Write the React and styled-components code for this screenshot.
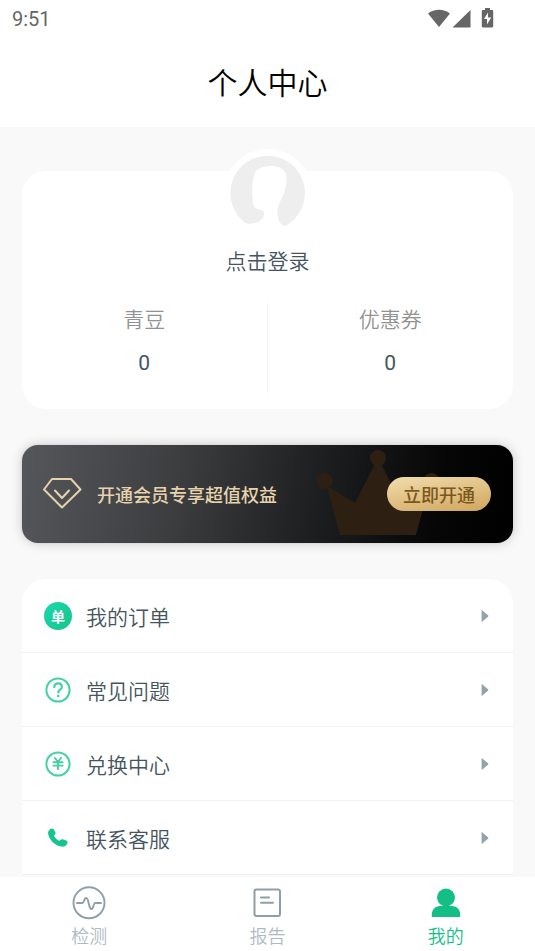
import React from "react";
import styled, { createGlobalStyle } from "styled-components";

const GlobalStyle = createGlobalStyle`
  * { box-sizing: border-box; }
  body {
    margin: 0;
    background: #f9f9f9;
    color: #455560;
    font-family: "Noto Sans CJK SC", sans-serif;
    font-size: 21px;
    font-weight: 350;
  }
  button { border: 0; margin: 0; padding: 0; background: none; font: inherit; color: inherit; cursor: pointer; }
  a { color: inherit; text-decoration: none; }
  h1, p, ul, dl, dt, dd { margin: 0; padding: 0; font-weight: inherit; }
  ul { list-style: none; }
  svg { display: block; flex: none; }
`;

const Page = styled.div`
  display: flex;
  flex-direction: column;
  min-height: 100vh;
`;

const StatusBar = styled.div`
  display: flex;
  align-items: center;
  justify-content: space-between;
  height: 38px;
  padding: 0 40px 0 12px;
  background: #fff;
  color: #666;
  font-family: Roboto, sans-serif;
  font-size: 20px;
  font-weight: 400;
`;

const StatusIcons = styled.div`
  display: flex;
  align-items: center;
  height: 36px;
`;

const Header = styled.header`
  display: flex;
  align-items: center;
  justify-content: center;
  height: 89px;
  padding-bottom: 4px;
  background: #fff;
  color: #000;
`;

const Title = styled.h1`
  font-size: 30px;
  line-height: 44px;
`;

const Content = styled.main`
  display: flex;
  flex-direction: column;
  gap: 36px;
  flex: 1;
  padding: 44px 22px 2px;
`;

const ProfileCard = styled.section`
  display: flex;
  flex-direction: column;
  align-items: center;
  padding-bottom: 16px;
  border-radius: 24px;
  background: #fff;
`;

const Avatar = styled.div`
  width: 88px;
  height: 88px;
  margin-top: -22px;
  border-radius: 50%;
  background: #fff;
  overflow: hidden;
`;

const LoginButton = styled.button`
  && {
    margin-top: 8px;
    line-height: 30px;
  }
`;

const Stats = styled.dl`
  display: grid;
  grid-template-columns: 1fr 1fr;
  align-self: stretch;
  margin-top: 28px;
`;

const Stat = styled.div`
  display: flex;
  flex-direction: column;
  align-items: center;
  gap: 15px;
  padding-bottom: 15px;
  line-height: 30px;

  &:first-child { border-right: 1px solid #f3f4f4; }
`;

const StatLabel = styled.dt`
  color: #929292;
`;

const StatValue = styled.dd`
  color: #455560;
  font-family: Roboto, sans-serif;
  font-weight: 400;
`;

const Banner = styled.section`
  position: relative;
  display: flex;
  align-items: center;
  height: 98px;
  padding: 0 22px 0 20px;
  border-radius: 16px;
  background: linear-gradient(100deg, #56575b 0%, #3c3d3f 32%, #1f2022 58%, #060606 84%, #000 100%);
  box-shadow: 0 0 12px rgba(0, 0, 0, 0.2), 0 0 1px rgba(0, 0, 0, 0.3);
`;

const Crown = styled.svg`
  position: absolute;
  right: 73px;
  bottom: 7px;
`;

const BannerText = styled.p`
  flex: 1;
  margin-left: 14px;
  color: #e6d3ad;
  font-size: 18px;
  font-weight: 500;
  line-height: 28px;
`;

const OpenButton = styled.button`
  && {
    position: relative;
    width: 104px;
    height: 34px;
    border-radius: 17px;
    background: linear-gradient(170deg, #f2dcac, #cfa65e);
    color: #7a581c;
    font-size: 18px;
    font-weight: 500;
    line-height: 34px;
  }
`;

const Menu = styled.ul`
  border-radius: 24px 24px 0 0;
  background: #fff;
`;

const MenuItem = styled.li`
  border-bottom: 1px solid #f1f2f2;
`;

const MenuLink = styled.a`
  display: flex;
  align-items: center;
  height: 73px;
  padding: 0 24px 0 22px;
  line-height: 30px;
`;

const MenuLabel = styled.span`
  flex: 1;
  margin-left: 14px;
`;

const OrderBadge = styled.span`
  display: grid;
  place-items: center;
  width: 28px;
  height: 28px;
  border-radius: 50%;
  background: linear-gradient(135deg, #18d8ad, #17c48c);
  color: #fff;
  font-size: 14px;
  font-weight: 700;
  line-height: 26px;
`;

const TabBar = styled.nav`
  position: sticky;
  bottom: 0;
  display: grid;
  grid-template-columns: repeat(3, 1fr);
  height: 74px;
  background: #fff;
`;

const Tab = styled.a`
  display: flex;
  flex-direction: column;
  align-items: center;
  gap: 1px;
  padding-top: 8px;
  color: ${(p) => (p.$active ? "#14bf86" : "#b0bac1")};
  font-size: 18px;
  line-height: 26px;
`;

const QuestionIcon = () => (
  <svg width="28" height="28" viewBox="0 0 28 28" fill="none" stroke="#43d2a0" strokeLinecap="round">
    <circle cx="14" cy="14" r="11.6" strokeWidth="2" />
    <path d="M10.3 11.2c0-2.3 1.6-3.8 3.8-3.8s3.7 1.4 3.7 3.5c0 2.8-3.6 2.8-3.6 5.6" strokeWidth="2.2" />
    <circle cx="14.2" cy="20" r=".6" strokeWidth="1.4" />
  </svg>
);

const YuanIcon = () => (
  <svg width="28" height="28" viewBox="0 0 28 28" fill="none" stroke="#43d2a0" strokeLinecap="round">
    <circle cx="14" cy="14" r="11.6" strokeWidth="2" />
    <path d="M10.9 8l3.1 3.8 3.1-3.800M9.400 12.200h9.200M9.400 15.600h9.200M14 12.200v7" strokeWidth="1.900" />
  </svg>
);

const PhoneIcon = () => (
  <svg width="28" height="28" viewBox="0 0 28 28">
    <path
      d="M6.300 5.100c1.100-.9 2.700-.7 3.500.5l1.400 2.500c.6 1.100.3 2.100-.6 2.900-.6.600-.5 1.100 0 1.800 1 1.500 2.100 2.600 3.500 3.500.9.600 1.600.4 2.200-.3.700-.8 1.500-1 2.500-.7l3.400 1.200c1.300.5 1.700 1.700 1.100 2.900-1.200 2.500-3.300 3.600-6 3.200C10.700 21.600 4.900 15.900 4.100 9.600 3.900 7.800 4.700 6.200 6.300 5.100z"
      fill="#17c48c"
    />
  </svg>
);

const Arrow = () => (
  <svg width="8" height="12" viewBox="0 0 8 12">
    <path d="M.6.8C.6.300 1 .200 1.400.500L7 5.300c.5.400.5 1 0 1.400L1.400 11.500C1 11.800.6 11.700.6 11.200z" fill="#93a3ac" />
  </svg>
);

const PulseIcon = () => (
  <svg width="36" height="36" viewBox="0 0 36 36" fill="none" stroke="#8f9fa7" strokeWidth="1.900" strokeLinecap="round" strokeLinejoin="round">
    <circle cx="18" cy="17.800" r="15.500" />
    <path d="M6 18h5.500c1.600 0 1.500-5 3.700-5 2.800 0 2.300 11 5.200 11 2.200 0 2-6 3.800-6H30" />
  </svg>
);

const ReportIcon = () => (
  <svg width="36" height="36" viewBox="0 0 36 36" fill="none" stroke="#8f9fa7" strokeWidth="2" strokeLinecap="round">
    <rect x="5.500" y="4.500" width="25.500" height="26.500" rx="2" />
    <path d="M12 12.500h8M12 17.800h12" />
  </svg>
);

const PersonIcon = () => (
  <svg width="36" height="36" viewBox="0 0 36 36" fill="#14bf86">
    <circle cx="18" cy="12.500" r="9" />
    <path d="M3.800 32v-2.500C3.800 24.500 7.500 21 12 21h12c4.500 0 8.200 3.500 8.200 8.500V32z" />
  </svg>
);

const menu = [
  { label: "我的订单", icon: <OrderBadge aria-hidden="true">单</OrderBadge> },
  { label: "常见问题", icon: <QuestionIcon /> },
  { label: "兑换中心", icon: <YuanIcon /> },
  { label: "联系客服", icon: <PhoneIcon /> },
];

const stats = [
  { label: "青豆", value: 0 },
  { label: "优惠券", value: 0 },
];

const tabs = [
  { label: "检测", icon: <PulseIcon /> },
  { label: "报告", icon: <ReportIcon /> },
  { label: "我的", icon: <PersonIcon />, active: true },
];

export default function App() {
  return (
    <Page>
      <GlobalStyle />
      <StatusBar>
        <span>9:51</span>
        <StatusIcons>
          <svg width="67" height="22" viewBox="0 0 67 22" fill="#666">
            <path d="M0 5.500C6.500.500 15.500.500 22 5.500L11 19z" />
            <path d="M42.500 2v17.500H24.500z" />
            <path d="M57 0h5v2h2c.7 0 1.200.5 1.200 1.200v15c0 .7-.5 1.200-1.200 1.200h-9c-.7 0-1.200-.5-1.200-1.200v-15c0-.7.5-1.200 1.200-1.200h2z" />
            <path d="M60 4.500l-4 6.500h3v5.500l4.200-7H60z" fill="#fff" />
          </svg>
        </StatusIcons>
      </StatusBar>
      <Header>
        <Title>个人中心</Title>
      </Header>
      <Content>
        <ProfileCard>
          <Avatar>
            <svg width="88" height="88" viewBox="72 27 264 264">
              <circle cx="203" cy="159" r="112" fill="#eee" />
              <path
                d="M166 96C180 74 244 70 256 98C265 122 256 154 244 178C232 198 229 218 237 244Q243 255 254 259L250 291H130L133 248Q150 254 170 248C190 240 196 222 190 213C184 205 167 212 161 197C154 170 155 116 166 96Z"
                fill="#fff"
              />
            </svg>
          </Avatar>
          <LoginButton type="button">点击登录</LoginButton>
          <Stats>
            {stats.map((s) => (
              <Stat key={s.label}>
                <StatLabel>{s.label}</StatLabel>
                <StatValue>{s.value}</StatValue>
              </Stat>
            ))}
          </Stats>
        </ProfileCard>

        <Banner>
          <Crown width="124" height="88" viewBox="0 0 124 88" fill="#2d2013">
            <circle cx="8.500" cy="33" r="8" />
            <circle cx="62" cy="10" r="8" />
            <circle cx="115.500" cy="33" r="8" />
            <path d="M11 38l28 17 20-39h6l20 39 28-17-13 49H24z" />
          </Crown>
          <svg width="41" height="34" viewBox="0 0 41 34" fill="none" stroke="#e6d3ad" strokeWidth="2" strokeLinejoin="round" strokeLinecap="round">
            <path d="M10 2h19l9.500 10.500L20 30.500 2 12.500z" />
            <path d="M13 13.500l7 7.500 7-7.500" />
          </svg>
          <BannerText>开通会员专享超值权益</BannerText>
          <OpenButton type="button">立即开通</OpenButton>
        </Banner>

        <Menu>
          {menu.map((m) => (
            <MenuItem key={m.label}>
              <MenuLink href="#">
                {m.icon}
                <MenuLabel>{m.label}</MenuLabel>
                <Arrow />
              </MenuLink>
            </MenuItem>
          ))}
        </Menu>
      </Content>
      <TabBar>
        {tabs.map((t) => (
          <Tab key={t.label} href="#" $active={t.active} aria-current={t.active ? "page" : undefined}>
            {t.icon}
            {t.label}
          </Tab>
        ))}
      </TabBar>
    </Page>
  );
}
